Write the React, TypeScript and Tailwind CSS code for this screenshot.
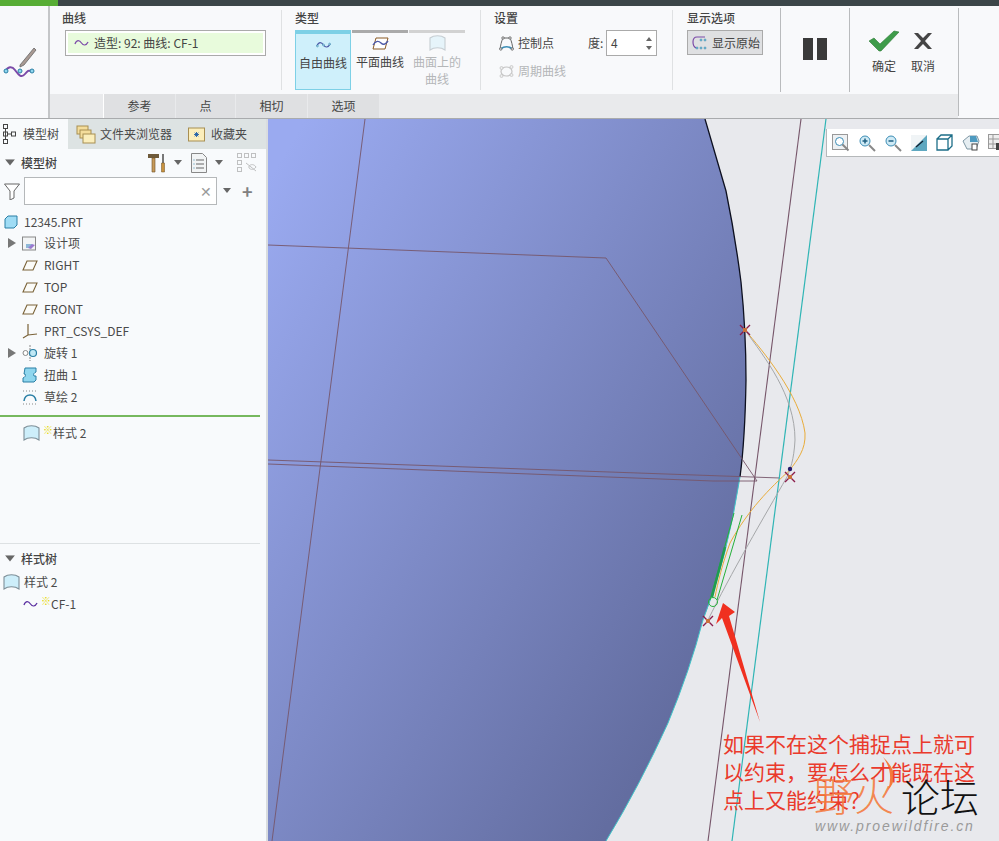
import type { ReactNode } from 'react'

const FONT = 'font-["Noto_Sans_CJK_SC","Noto_Sans",sans-serif]'

function Tri({ className = '' }: { className?: string }) {
  return (
    <svg width="8" height="6" viewBox="0 0 8 6" className={className}>
      <path d="M0 0h8L4 5z" fill="#666" />
    </svg>
  )
}

function Squiggle({ width = 16, color = '#7b4aa8', dots = false }: { width?: number; color?: string; dots?: boolean }) {
  return (
    <svg width={width} height="10" viewBox="0 0 16 10">
      <path d="M1 6C3 1 6 2 8 5s5 3 7-1" fill="none" stroke={color} strokeWidth="1.3" />
      {dots && (
        <g fill="#bfe8f5" stroke="#2a7fa5" strokeWidth=".6">
          <circle cx="1.5" cy="6" r="1" />
          <circle cx="8" cy="5" r="1" />
          <circle cx="14.5" cy="4" r="1" />
        </g>
      )}
    </svg>
  )
}

function PlaneCurve() {
  return (
    <svg width="17" height="13" viewBox="0 0 17 13">
      <path d="M4 1h12l-3 11H1z" fill="#fff" stroke="#8a5a24" strokeWidth="1" />
      <path d="M1 8C4 3 7 4 9 6s4 2 7-2" fill="none" stroke="#4d5aa8" strokeWidth="1.4" />
    </svg>
  )
}

function Plane() {
  return (
    <svg width="16" height="11" viewBox="0 0 16 11">
      <path d="M5 1h10l-4 9H1z" fill="#fbfbf8" stroke="#7a6238" strokeWidth="1.1" />
    </svg>
  )
}

function Surface({ className = '' }: { className?: string }) {
  return (
    <svg width="17" height="17" viewBox="0 0 17 17" className={className}>
      <path d="M1 3c4-3 11-3 15 0v12c-4-3-11-3-15 0z" fill="#cdeefa" stroke="#7e8f98" strokeWidth="1.1" />
    </svg>
  )
}

function Star() {
  return <span className="relative -top-[3px] ml-[3px] text-[10px] leading-none font-bold text-[#e6d800]">※</span>
}

function TreeRow({ icon, label, arrow = false }: { icon: ReactNode; label: string; arrow?: boolean }) {
  return (
    <div className="flex h-[22px] items-center">
      <div className="flex w-[22px] justify-center pl-[2px]">
        {arrow && (
          <svg width="8" height="10" viewBox="0 0 8 10">
            <path d="M0 0l8 5-8 5z" fill="#777" />
          </svg>
        )}
      </div>
      <div className="flex w-[22px] items-center">{icon}</div>
      <span className="text-xs text-[#4a4a4a]">{label}</span>
    </div>
  )
}

function GroupTitle({ children }: { children: ReactNode }) {
  return <div className="h-[20px] shrink-0 text-xs leading-[16px] font-medium text-[#444]">{children}</div>
}

function TypeButton({ label, bar, active, disabled, icon }: { label: string; bar: string; active?: boolean; disabled?: boolean; icon: ReactNode }) {
  return (
    <div className={`flex h-[60px] w-[56px] flex-col items-center ${active ? 'border border-[#7dd0e6] bg-[#cff0fb]' : ''}`}>
      <div className={`h-[3px] shrink-0 self-stretch ${bar}`} />
      <div className="flex h-[18px] items-center pt-[3px]">{icon}</div>
      <div className={`mt-[2px] w-[52px] text-center text-xs leading-[17px] ${disabled ? 'text-[#b4b6b8]' : 'text-[#444]'}`}>{label}</div>
    </div>
  )
}

function Ribbon() {
  return (
    <div className="flex h-[113px] border-b border-[#a9abad] bg-[#f8f9fb]">
      {/* tool icon */}
      <div className="flex w-[50px] items-start border-r-2 border-[#c4c6c8] pt-[40px] pl-[3px]">
        <svg width="34" height="36" viewBox="0 0 34 36">
          <path d="M2 26c3-6 7-6 10-2s6 9 10 4 4-3 7-3" fill="none" stroke="#7b4aa8" strokeWidth="2" />
          <g fill="#8fd6ee" stroke="#2a7fa5" strokeWidth="1">
            <circle cx="3" cy="25" r="2" />
            <circle cx="17" cy="25" r="2" />
            <circle cx="29" cy="25" r="2" />
          </g>
          <path d="M17 19L31 2l2 2-12 15-4 2z" fill="#a99a93" stroke="#666" strokeWidth=".8" />
        </svg>
      </div>

      <div className="flex w-[908px] flex-col">
        <div className="flex h-[88px]">
          <div className="my-[4px] flex w-[232px] flex-col border-r border-[#dfe1e3] pl-[12px]">
            <GroupTitle>曲线</GroupTitle>
            <div className="ml-[3px] flex h-[26px] w-[201px] items-center border border-[#aaa] bg-white p-[2px]">
              <div className="flex h-full w-full items-center gap-[5px] bg-[#e8fbdc] pl-[6px] text-xs text-[#444]">
                <Squiggle width={15} />
                造型: 92: 曲线: CF-1
              </div>
            </div>
          </div>

          <div className="my-[4px] flex w-[199px] flex-col border-r border-[#dfe1e3] pl-[13px]">
            <GroupTitle>类型</GroupTitle>
            <div className="flex h-[60px] gap-[1px]">
              <TypeButton label="自由曲线" bar="bg-[#7dd0e6]" active icon={<Squiggle width={15} color="#4d5aa8" dots />} />
              <TypeButton label="平面曲线" bar="bg-[#aaaaaa]" icon={<PlaneCurve />} />
              <TypeButton label="曲面上的曲线" bar="bg-[#d2d2d2]" disabled icon={<Surface className="opacity-40" />} />
            </div>
          </div>

          <div className="my-[4px] flex w-[192px] flex-col border-r border-[#dfe1e3] pl-[13px]">
            <GroupTitle>设置</GroupTitle>
            <div className="flex h-[26px] items-center">
              <div className="flex w-[94px] items-center gap-[4px] pl-[5px] text-xs text-[#444]">
                <svg width="15" height="15" viewBox="0 0 15 15">
                  <path d="M1 13C2 7 3 4 4 2h7c1 2 2 5 3 11" fill="none" stroke="#555" strokeWidth=".9" />
                  <path d="M1.5 13c4-3 8-3 12 0" fill="none" stroke="#3c8db5" strokeWidth="1.6" />
                  <g fill="#fff" stroke="#555" strokeWidth=".8">
                    <circle cx="1.8" cy="13" r="1.2" />
                    <circle cx="13.2" cy="13" r="1.2" />
                    <circle cx="4" cy="2" r="1.2" />
                    <circle cx="11" cy="2" r="1.2" />
                  </g>
                </svg>
                控制点
              </div>
              <span className="w-[18px] text-xs text-[#444]">度:</span>
              <div className="flex h-[26px] w-[51px] items-center justify-between border border-[#aaa] bg-white px-[4px] text-xs text-[#444]">
                4
                <div className="flex flex-col gap-[5px]">
                  <svg width="6" height="4" viewBox="0 0 6 4"><path d="M3 0l3 4H0z" fill="#666" /></svg>
                  <svg width="6" height="4" viewBox="0 0 6 4"><path d="M0 0h6L3 4z" fill="#666" /></svg>
                </div>
              </div>
            </div>
            <div className="mt-[2px] flex h-[26px] items-center gap-[4px] pl-[5px] text-xs text-[#b4b6b8]">
              <svg width="15" height="15" viewBox="0 0 15 15">
                <ellipse cx="7.5" cy="7.5" rx="5.5" ry="4.5" fill="none" stroke="#c4c4c4" strokeWidth="1.2" />
                <g fill="#eee" stroke="#c4c4c4" strokeWidth=".8">
                  <circle cx="2.5" cy="4" r="1.5" />
                  <circle cx="12.5" cy="3" r="1.5" />
                  <circle cx="2.5" cy="12" r="1.5" />
                  <circle cx="12.5" cy="11" r="1.5" />
                </g>
              </svg>
              周期曲线
            </div>
          </div>

          <div className="my-[4px] flex w-[107px] flex-col pl-[14px]">
            <GroupTitle>显示选项</GroupTitle>
            <div className="flex h-[25px] w-[76px] items-center gap-[5px] border border-[#aaa] bg-[#dfe0e2] pl-[3px] text-xs text-[#444]">
              <svg width="16" height="15" viewBox="0 0 16 15">
                <path d="M14 2H6C3 2 2 4 2 7s1 5 3 6" fill="none" stroke="#7b4aa8" strokeWidth="1.2" />
                <g fill="#8fd6ee" stroke="#2a7fa5" strokeWidth=".6">
                  <circle cx="14" cy="5" r="1" />
                  <circle cx="10" cy="5" r="1" />
                  <circle cx="6" cy="13" r="1" />
                  <circle cx="10" cy="13" r="1" />
                  <circle cx="14" cy="13" r="1" />
                </g>
              </svg>
              显示原始
            </div>
          </div>

          <div className="my-[2px] flex w-[70px] items-start justify-center gap-[4px] border-x border-[#b9bbbd] pt-[30px]">
            <div className="h-[22px] w-[10px] bg-[#3a3a3a]" />
            <div className="h-[22px] w-[10px] bg-[#3a3a3a]" />
          </div>

          <div className="flex gap-[9px] pt-[24px] pl-[19px]">
            <div className="flex w-[30px] flex-col items-center">
              <svg width="30" height="22" viewBox="0 0 30 22">
                <path d="M0 11l5-3 6 6L25 1l5 1-18 19h-2z" fill="#3e9c4a" stroke="#2d7a38" strokeWidth=".6" />
              </svg>
              <span className="mt-[6px] text-xs text-[#444]">确定</span>
            </div>
            <div className="flex w-[30px] flex-col items-center">
              <svg width="22" height="22" viewBox="0 0 22 22">
                <path d="M2 3h4l5 5 5-5h4l-7 8 7 8h-4l-5-5-5 5H2l7-8z" fill="#454545" />
              </svg>
              <span className="mt-[6px] text-xs text-[#444]">取消</span>
            </div>
          </div>
        </div>

        {/* tab strip */}
        <div className="flex h-[24px] bg-[#e9eaec] text-xs text-[#444]">
          <div className="w-[53px]" />
          <div className="flex w-[72px] items-center justify-center border-l border-white bg-[#dfe0e2]">参考</div>
          <div className="ml-[1px] flex w-[59px] items-center justify-center bg-[#dfe0e2]">点</div>
          <div className="ml-[1px] flex w-[71px] items-center justify-center bg-[#dfe0e2]">相切</div>
          <div className="ml-[1px] flex w-[71px] items-center justify-center bg-[#dfe0e2]">选项</div>
        </div>
      </div>
      <div className="my-[2px] w-px bg-[#b9bbbd]" />
    </div>
  )
}

function ModelPanel() {
  return (
    <div className="flex w-[268px] flex-col border-r-2 border-[#d9dcdf] bg-[#f8fafc]">
      <div className="flex h-[30px] shrink-0 items-center bg-[#dde3e3] text-xs text-[#4a4a4a]">
        <div className="flex h-full w-[68px] items-center gap-[6px] bg-[#f8fafc] pl-[3px]">
          <svg width="14" height="20" viewBox="0 0 14 20">
            <g fill="none" stroke="#444" strokeWidth="1">
              <rect x=".5" y=".5" width="4" height="4" />
              <rect x=".5" y="8" width="4" height="4" />
              <rect x=".5" y="15.5" width="4" height="4" />
              <rect x="8.5" y="8" width="4" height="4" />
              <path d="M2.5 4.5v11M4.5 10h4" />
            </g>
          </svg>
          模型树
        </div>
        <div className="flex w-[107px] items-center gap-[4px] pl-[8px]">
          <svg width="20" height="20" viewBox="0 0 20 20">
            <rect x="1" y="2" width="11" height="8" fill="#f4dd9b" stroke="#a88f52" />
            <rect x="4" y="6" width="11" height="8" fill="#f4dd9b" stroke="#a88f52" />
            <rect x="7" y="10" width="12" height="9" fill="#fbeebb" stroke="#a88f52" />
          </svg>
          文件夹浏览器
        </div>
        <div className="flex items-center gap-[6px] pl-[13px]">
          <svg width="17" height="16" viewBox="0 0 17 16">
            <rect x=".5" y="2" width="16" height="13" fill="#fbeebb" stroke="#a88f52" />
            <path d="M8.5 6v5M6 8.500h5M6.700 6.700l3.600 3.600M10.300 6.700l-3.600 3.600" stroke="#1d5ea8" strokeWidth=".9" />
          </svg>
          收藏夹
        </div>
      </div>

      <div className="flex h-[28px] shrink-0 items-center pr-[8px] pl-[6px]">
        <Tri className="scale-125" />
        <span className="ml-[7px] text-xs font-medium text-[#444]">模型树</span>
        <div className="ml-[91px] flex items-center">
          <svg width="18" height="20" viewBox="0 0 18 20">
            <path d="M0 1h11v4H0z" fill="#6e5a3a" />
            <path d="M4 5h3v14H4z" fill="#c79a5a" stroke="#6b4e22" strokeWidth=".6" />
            <path d="M14 1h2v9h-2z" fill="#777" />
            <path d="M13.500 10h3v9h-3z" fill="#c9923e" stroke="#6b4e22" strokeWidth=".5" />
          </svg>
          <Tri className="ml-[8px]" />
          <svg width="16" height="20" viewBox="0 0 16 20" className="ml-[9px]">
            <path d="M.5.500h11l4 4v15H.5z" fill="#f2f4f5" stroke="#888" />
            <path d="M5 7h8M5 11h8M5 15h8" stroke="#666" />
            <path d="M2.500 7h1M2.500 11h1M2.500 15h1" stroke="#3c8db5" />
          </svg>
          <Tri className="ml-[8px]" />
          <svg width="20" height="20" viewBox="0 0 20 20" className="ml-[14px] opacity-50">
            <g fill="none" stroke="#888">
              <rect x=".5" y=".5" width="4" height="4" />
              <rect x=".5" y="7.500" width="4" height="4" />
              <rect x=".5" y="14.500" width="4" height="4" />
              <rect x="7.500" y=".5" width="4" height="4" />
              <rect x="14.500" y=".5" width="4" height="4" />
              <path d="M9 10l10 8M12 13c2-2 5-2 7 1-2 3-5 3-7 1z" />
            </g>
          </svg>
        </div>
      </div>

      <div className="flex h-[28px] shrink-0 items-center pl-[4px]">
        <svg width="16" height="17" viewBox="0 0 16 17">
          <path d="M.5 1h15L10 8v7l-4 2V8z" fill="#fff" stroke="#666" />
        </svg>
        <div className="ml-[4px] flex h-[28px] w-[193px] items-center justify-end border border-[#b5b8ba] bg-white pr-[4px] text-sm text-[#9a9a9a]">
          ✕
        </div>
        <Tri className="ml-[6px]" />
        <span className="ml-[11px] text-lg leading-none font-bold text-[#808080]">+</span>
      </div>

      <div className="mt-[5px] flex h-[22px] shrink-0 items-center pt-[2px] pl-[4px]">
        <svg width="14" height="14" viewBox="0 0 14 14" className="mr-[6px]">
          <path d="M1 4l3-3h9v9l-3 3H1z" fill="#9fdcf5" stroke="#2a7fa5" />
        </svg>
        <span className="text-xs text-[#4a4a4a]">12345.PRT</span>
      </div>
      <TreeRow
        arrow
        label="设计项"
        icon={
          <svg width="15" height="16" viewBox="0 0 15 16">
            <rect x=".5" y="2" width="13" height="13" fill="#f2f4f5" stroke="#888" />
            <path d="M4 9h6v4H4z" fill="#8fb8d8" />
            <path d="M6 13l4-4 3 1-4 4z" fill="#9a7ad0" />
          </svg>
        }
      />
      <TreeRow label="RIGHT" icon={<Plane />} />
      <TreeRow label="TOP" icon={<Plane />} />
      <TreeRow label="FRONT" icon={<Plane />} />
      <TreeRow
        label="PRT_CSYS_DEF"
        icon={
          <svg width="16" height="16" viewBox="0 0 16 16">
            <path d="M6 1v11L1 15M6 12l9-1" fill="none" stroke="#7a6238" strokeWidth="1.2" />
          </svg>
        }
      />
      <TreeRow
        arrow
        label="旋转 1"
        icon={
          <svg width="16" height="16" viewBox="0 0 16 16">
            <path d="M8 0v16" stroke="#888" strokeDasharray="2 1" />
            <circle cx="3.500" cy="8" r="2.500" fill="#fff" stroke="#888" />
            <circle cx="11" cy="8" r="3.500" fill="#bfe8f5" stroke="#2a7fa5" strokeWidth="1.200" />
          </svg>
        }
      />
      <TreeRow
        label="扭曲 1"
        icon={
          <svg width="16" height="16" viewBox="0 0 16 16">
            <path d="M3 1h11v4c-2 1-3 2-2 4h2v4l-2 2H1v-4c2-1 3-2 2-4H2z" fill="#8fd6ee" stroke="#2a7fa5" />
          </svg>
        }
      />
      <TreeRow
        label="草绘 2"
        icon={
          <svg width="16" height="15" viewBox="0 0 16 15">
            <path d="M1 1h14M1 14h14" stroke="#888" strokeDasharray="1 2" />
            <path d="M2 11c1-8 11-8 12 0" fill="none" stroke="#2a7fa5" strokeWidth="1.500" />
          </svg>
        }
      />

      <div className="mt-[7px] h-[2px] w-[260px] shrink-0 bg-[#76b85e]" />
      <div className="flex h-[32px] shrink-0 items-center pl-[23px]">
        <Surface />
        <Star />
        <span className="text-xs text-[#4a4a4a]">样式 2</span>
      </div>

      <div className="mt-[94px] h-px w-[260px] shrink-0 bg-[#dde1e3]" />
      <div className="flex h-[29px] shrink-0 items-center pl-[6px]">
        <Tri className="scale-125" />
        <span className="ml-[7px] text-xs font-medium text-[#444]">样式树</span>
      </div>
      <div className="flex h-[18px] shrink-0 items-center pl-[3px]">
        <Surface className="mr-[4px]" />
        <span className="text-xs text-[#4a4a4a]">样式 2</span>
      </div>
      <div className="flex h-[26px] shrink-0 items-center pl-[23px]">
        <Squiggle width={15} color="#5a2ea0" />
        <Star />
        <span className="text-xs text-[#4a4a4a]">CF-1</span>
      </div>
    </div>
  )
}

function Marker({ x, y }: { x: number; y: number }) {
  return (
    <g stroke="#8b1c4a" strokeWidth="1.4">
      <path d={`M${x - 5} ${y - 5}l10 10M${x + 5} ${y - 5}l-10 10`} />
      <rect x={x - 2} y={y - 2} width="4" height="4" fill="#c9703a" stroke="none" />
    </g>
  )
}

function ViewToolbar() {
  return (
    <div className="absolute top-[10px] left-[558px] flex h-[28px] w-[175px] items-center gap-[8px] border-b border-l border-[#b5b8ba] bg-white pl-[5px] [&>svg]:shrink-0">
      <svg width="18" height="18" viewBox="0 0 18 18">
        <rect x=".5" y=".5" width="15" height="15" fill="#eef1f3" stroke="#999" />
        <circle cx="7.500" cy="7.500" r="4" fill="#fff" stroke="#3c8db5" />
        <path d="M10.500 10.500l6 6" stroke="#888" strokeWidth="2" />
      </svg>
      <svg width="18" height="18" viewBox="0 0 18 18">
        <circle cx="7" cy="7" r="5" fill="#cfeaf5" stroke="#3c8db5" />
        <path d="M4.500 7h5M7 4.500v5" stroke="#1d5e80" strokeWidth="1.500" />
        <path d="M11 11l6 6" stroke="#888" strokeWidth="2" />
      </svg>
      <svg width="18" height="18" viewBox="0 0 18 18">
        <circle cx="7" cy="7" r="5" fill="#cfeaf5" stroke="#3c8db5" />
        <path d="M4.500 7h5" stroke="#1d5e80" strokeWidth="1.500" />
        <path d="M11 11l6 6" stroke="#888" strokeWidth="2" />
      </svg>
      <svg width="16" height="16" viewBox="0 0 16 16" className="mx-[1px]">
        <rect width="16" height="16" fill="#f0f4f6" />
        <path d="M16 0v16H0z" fill="#5fa8c0" />
        <path d="M5 12l7-6" stroke="#123" strokeWidth="1.300" />
      </svg>
      <svg width="18" height="18" viewBox="0 0 18 18">
        <path d="M1 5h11v11H1zM1 5l4-4h11v11l-4 4M12 5l4-4" fill="#fff" stroke="#1d6e88" strokeWidth="1.300" />
      </svg>
      <svg width="18" height="18" viewBox="0 0 18 18">
        <path d="M1 7l6-5h8l2 5-3 8H5z" fill="#e6eef2" stroke="#7f97a4" />
        <path d="M8 2h6l2 6H8z" fill="#4d9ac0" />
        <rect x="10" y="10" width="5" height="6" fill="#fff" stroke="#444" />
      </svg>
      <svg width="18" height="18" viewBox="0 0 18 18">
        <rect x=".5" y=".5" width="14" height="14" fill="#eee" stroke="#999" />
        <path d="M.5 5h14M.5 10h14M5 .500v14" stroke="#999" />
        <rect x="8" y="9" width="9" height="7" fill="#444" />
      </svg>
    </div>
  )
}

function Viewport() {
  return (
    <div className="relative flex-1 overflow-hidden bg-[#e8e9ed]">
      <svg width="731" height="722" viewBox="268 119 731 722" className="block">
        <defs>
          <linearGradient id="body" gradientUnits="userSpaceOnUse" x1="268" y1="180" x2="803" y2="507">
            <stop offset="0" stopColor="#9aaaf0" />
            <stop offset="1" stopColor="#636da0" />
          </linearGradient>
        </defs>
        <path
          d="M705 119L726 191Q735 235 741 282Q746 330 746 380Q745 440 740 477Q727 560 703 620Q690 670 668 723Q640 785 606 841H268V119Z"
          fill="url(#body)"
        />
        <path d="M705 119L726 191Q735 235 741 282Q746 330 746 380Q745 440 740 477" fill="none" stroke="#0d1020" strokeWidth="1.300" />
        <path d="M740 477Q727 560 703 620Q690 670 668 723Q640 785 606 841" fill="none" stroke="#40c4c8" strokeWidth="1" />
        <g fill="none" stroke="#76566a" strokeWidth=".9">
          <path d="M365 119L272 841" />
          <path d="M268 245L606 258L757 481L713 481L268 464" />
          <path d="M268 460L780 478" />
          <path d="M801 119L708 841" strokeWidth="1.100" />
        </g>
        <path d="M826 119L732 841" fill="none" stroke="#2fb5b5" strokeWidth="1.200" />
        <path d="M745 330C762 350 800 395 805 433C806 450 797 460 790 470C770 488 748 510 730 543C722 565 718 582 715 597" fill="none" stroke="#e8ac3a" strokeWidth="1" />
        <path d="M745 330C765 358 795 395 795 440C794 460 790 470 787 477C765 515 730 575 708 620" fill="none" stroke="#a5a7a9" strokeWidth="1" />
        <g fill="none" stroke="#25b03a" strokeWidth="1">
          <path d="M734 513L710 600" />
          <path d="M742 515L717 600" />
          <path d="M725 547L712 597" strokeWidth="2.500" stroke="#1f9c50" />
          <circle cx="713" cy="602" r="4.500" />
        </g>
        <Marker x={745} y={330} />
        <Marker x={790} y={477} />
        <Marker x={708} y={621} />
        <circle cx="790" cy="469" r="2.200" fill="#241a6a" />
        <path d="M723 603L735 612L729 616L760 722L722 618L716 624Z" fill="#f03020" />
        <path d="M883 757Q902 775 888 790Q894 772 883 757Z" fill="#f47a3c" />
      </svg>

      <ViewToolbar />

      {/* annotation over the canvas */}
      <div className="absolute top-[610px] left-[455px] w-[260px] text-[21px] leading-[28px] text-[#ea3a2c]">
        如果不在这个捕捉点上就可以约束，要怎么才能既在这点上又能约束？
      </div>
      <div className="absolute top-[650px] left-[546px] text-[40px] leading-[50px] font-light text-[#f47a3c]/90">野火</div>
      <div className="absolute top-[652px] left-[633px] text-[39px] leading-[48px] font-light text-[#111]">论坛</div>
      <div className="absolute top-[698px] left-[547px] font-['Liberation_Sans',sans-serif] text-[14px] leading-[18px] tracking-[1.900px] text-[#9a9a9a] italic">
        www.proewildfire.cn
      </div>
    </div>
  )
}

export default function App() {
  return (
    <div className={`flex h-[841px] w-[999px] flex-col overflow-hidden bg-[#f8f9fb] ${FONT}`}>
      <div className="flex h-[6px] shrink-0 bg-[#3c4649]">
        <div className="w-[58px] bg-[#57ad35]" />
      </div>
      <Ribbon />
      <div className="flex flex-1 overflow-hidden">
        <ModelPanel />
        <Viewport />
      </div>
    </div>
  )
}
